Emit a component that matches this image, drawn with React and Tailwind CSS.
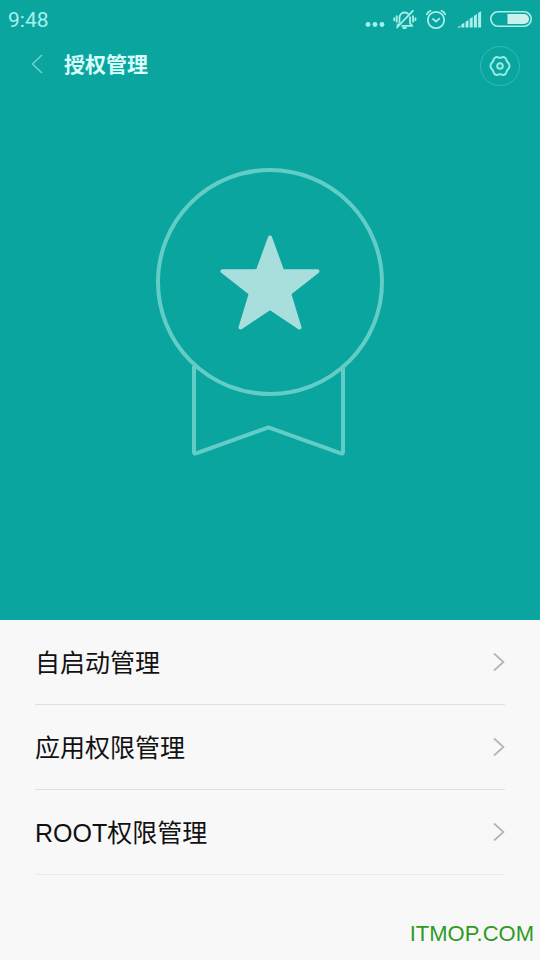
const menuItems = [
  { id: "autostart", label: "自启动管理" },
  { id: "permissions", label: "应用权限管理" },
  { id: "root", label: "ROOT权限管理" },
];

function MoreDots() {
  return (
    <svg width="20" height="20" viewBox="0 0 20 20" fill="currentColor" aria-hidden="true">
      <circle cx="3" cy="14.5" r="2.4" />
      <circle cx="10" cy="14.5" r="2.4" />
      <circle cx="17" cy="14.5" r="2.4" />
    </svg>
  );
}

function BellOff() {
  return (
    <svg
      width="24"
      height="20"
      viewBox="0 0 24 20"
      fill="none"
      stroke="currentColor"
      strokeWidth="1.8"
      strokeLinejoin="round"
      aria-hidden="true"
    >
      <path d="M6.5 12.8V8C6.5 4.8 8.5 2.5 11.5 2.5c1.800 0 3.100.6 4 1.700M17 6.500v6.800l2.300 2.500H8.500M4 15.800l2.500-2.500" />
      <path d="M9.5 17.9h4" strokeWidth="2" />
      <path d="M19.8 0.8 4 17.5" strokeLinecap="round" />
      <path d="M3.7 5.5v7M1.3 7.5v3.500M20 5.500v7M22.400 7.500v3.500" />
    </svg>
  );
}

function AlarmClock() {
  return (
    <svg
      width="22"
      height="20"
      viewBox="0 0 22 20"
      fill="none"
      stroke="currentColor"
      strokeLinecap="round"
      strokeLinejoin="round"
      aria-hidden="true"
    >
      <circle cx="11" cy="10" r="8.2" strokeWidth="1.8" />
      <path d="M8 9 11 11.5l3.400-2.900" strokeWidth="1.7" />
      <path d="M1.8 4.2C2.6 2.7 3.9 1.5 5.5.8M20.2 4.2C19.4 2.7 18.1 1.5 16.5.8" strokeWidth="1.8" />
    </svg>
  );
}

function Signal() {
  return (
    <svg width="25" height="20" viewBox="0 0 25 20" fill="currentColor" aria-hidden="true">
      <path d="M0 17.5l3.200-2v2zM4.300 14.500l3-1.800v4.800h-3zM8.500 11.700l3-1.800v7.600h-3zM12.700 8.800l3-1.900v10.600h-3zM16.900 5.900l3-1.900v13.500h-3zM21.100 3l3-1.800v16.300h-3z" />
    </svg>
  );
}

function Battery() {
  return (
    <svg width="42" height="20" viewBox="0 0 42 20" aria-hidden="true">
      <rect x="0.8" y="1.8" width="40.4" height="14.4" rx="7.2" fill="none" stroke="currentColor" strokeWidth="1.6" />
      <path d="M17.5 4H34a5 5 0 0 1 0 10H17.5z" fill="#c9f1ed" />
    </svg>
  );
}

function StatusBar() {
  return (
    <div className="flex h-10 items-center justify-between px-2 font-['Roboto',sans-serif] text-[#a9f0ea]">
      <span className="text-[21px] leading-none">9:48</span>
      <div className="flex items-center">
        <MoreDots />
        <span className="ml-2">
          <BellOff />
        </span>
        <span className="ml-2">
          <AlarmClock />
        </span>
        <span className="ml-2.5">
          <Signal />
        </span>
        <span className="ml-2">
          <Battery />
        </span>
      </div>
    </div>
  );
}

function TitleBar() {
  return (
    <div className="flex h-12 items-center justify-between px-5">
      <div className="flex items-center">
        <button type="button" aria-label="返回" className="flex h-12 w-11 items-center pl-2.5">
          <svg width="14" height="20" viewBox="0 0 14 20" fill="none" stroke="#6fd0ca" strokeWidth="1.6" aria-hidden="true">
            <path d="M12 1 2.5 10 12 19" />
          </svg>
        </button>
        <h1 className="text-[21px] leading-none font-bold text-[#d8fffb]">授权管理</h1>
      </div>
      <button
        type="button"
        aria-label="设置"
        className="mt-1 flex size-10 items-center justify-center rounded-full border border-[#35bab3] text-[#97ebe5]"
      >
        <svg width="22" height="22" viewBox="0 0 22 22" fill="none" stroke="currentColor" strokeWidth="2" strokeLinejoin="round" aria-hidden="true">
          <path d="M7.400 2Q8.400 1.900 9.300 2.500Q11 3.200 12.700 2.500Q13.600 1.900 14.600 2Q16.800 2.600 17.400 4.800Q17.800 6.600 19.100 7.800Q20.500 9.100 20.500 11Q20.500 12.900 19.100 14.200Q17.800 15.400 17.400 17.200Q16.800 19.400 14.600 20Q13.600 20.100 12.700 19.500Q11 18.800 9.300 19.500Q8.400 20.100 7.400 20Q5.200 19.400 4.600 17.200Q4.200 15.400 2.900 14.200Q1.500 12.900 1.500 11Q1.500 9.100 2.900 7.800Q4.200 6.600 4.600 4.800Q5.200 2.600 7.400 2Z" />
          <circle cx="11" cy="11" r="2.8" />
        </svg>
      </button>
    </div>
  );
}

function Medal() {
  return (
    <svg width="228" height="292" viewBox="0 0 228 292" fill="none" strokeLinejoin="round" aria-hidden="true">
      <circle cx="114" cy="114" r="112" stroke="#62cdc7" strokeWidth="4" />
      <path d="M38 198v86q0 2 2 1.4l72.500-26L185 285.400q2 .6 2-1.400v-84" stroke="#62cdc7" strokeWidth="4" />
      <path
        d="M114 69.5 126.2 103 161.5 103.3 133.2 125.5 143.5 159.5 114 139.8 84.5 159.5 94.8 125.5 66.5 103.3 101.8 103Z"
        fill="#a8dfdd"
        stroke="#a8dfdd"
        strokeWidth="4"
      />
    </svg>
  );
}

function MenuRow({ label }) {
  return (
    <li className="border-b border-[#dfdfdf] last:border-[#ebebeb]">
      <button type="button" className="flex h-21 w-full items-center justify-between text-left">
        <span className="pt-0.5 text-[25px] leading-none text-[#111111]">{label}</span>
        <svg width="12" height="20" viewBox="0 0 12 20" fill="none" stroke="#b5b5b5" strokeWidth="1.7" aria-hidden="true">
          <path d="M1 1.5 10.5 10 1 18.5" />
        </svg>
      </button>
    </li>
  );
}

export default function App() {
  return (
    <div className="flex min-h-screen flex-col bg-[#f8f8f8] font-['Liberation_Sans','Noto_Sans_CJK_SC',sans-serif]">
      <header className="bg-[#0ba5a0] pb-40">
        <StatusBar />
        <TitleBar />
        <div className="flex justify-center pt-20">
          <Medal />
        </div>
      </header>

      <main className="flex-1 px-[35px]">
        <ul>
          {menuItems.map((item) => (
            <MenuRow key={item.id} label={item.label} />
          ))}
        </ul>
      </main>

      <footer className="px-1.5 pb-3 text-right text-[22px] leading-7 text-[#2f9a24]">ITMOP.COM</footer>
    </div>
  );
}
